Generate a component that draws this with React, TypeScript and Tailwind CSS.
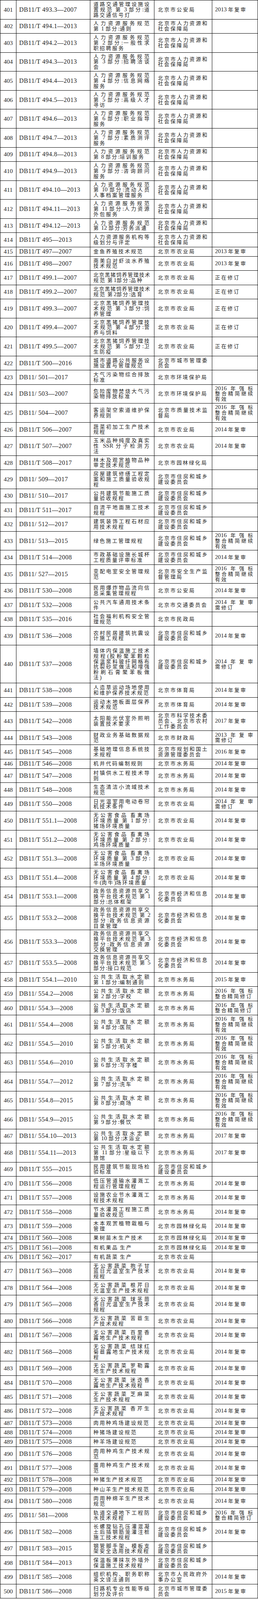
const A = "北京市人力资源和|社会保障局";
const N = "北京市农业局";
const Z = "北京市住房和城乡|建设委员会";
const S = "北京市水务局";
const Y = "北京市园林绿化局";
const J = "北京市经济和信息|化委员会";
const R13 = "2013 年复审";
const R14 = "2014 年复审";
const F = "2016 年强标|整合精简继续|有效";
const FX = "2016 年强标|整合精简修订";
const X = "正在修订";
const R14X = "2014 年复审|需修订";
const HR = "人力资源服务规范";
const GS = "公共生活取水定额";
const WG = "无公害食品 畜禽场";
const ZW = "政务信息资源共享交";
const HZ = "北京黑猪饲养管理技";

type Row = [number, string, string, string, string, number];

const rows: Row[] = [
  [401, "DB11/T 493.3—2007", "道路交通管理设施设|置规范 第 3 部分:道|路交通信号灯", "北京市公安局", R13, 3],
  [402, "DB11/T 494.1—2013", HR + "|第 1 部分:通则", A, "", 2],
  [403, "DB11/T 494.2—2013", HR + "|第 2 部分:一般性求|职招聘服务", A, "", 3],
  [404, "DB11/T 494.3—2013", HR + "|第 3 部分:招聘洽谈|会", A, "", 3],
  [405, "DB11/T 494.4—2013", HR + "|第 4 部分:信息网络|服务", A, "", 3],
  [406, "DB11/T 494.5—2013", HR + "|第 5 部分:高级人才|寻访", A, "", 3],
  [407, "DB11/T 494.6—2013", HR + "|第 6 部分:职业指导|服务", A, "", 3],
  [408, "DB11/T 494.7—2013", HR + "|第 7 部分:素质测评|服务", A, "", 3],
  [409, "DB11/T 494.8—2013", HR + "|第 8 部分:培训服务", A, "", 2],
  [410, "DB11/T 494.9—2013", HR + "|第 9 部分:咨询顾问|服务", A, "", 3],
  [411, "DB11/T 494.10—2013", HR + "|第 10 部分:流动人员|人事档案管理服务", A, "", 3],
  [412, "DB11/T 494.11—2013", HR + "|第 11 部分:人力资源|外包服务", A, "", 3],
  [413, "DB11/T 494.12—2013", HR + "|第 12 部分:劳务派遣", A, "", 2],
  [414, "DB11/T 495—2013", "人力资源服务机构等|级划分与评定", A, "", 2],
  [415, "DB11/T 497—2007", "金鱼养殖技术规范", N, R13, 1],
  [416, "DB11/T 498—2007", "南美白对虾淡水养殖|技术规范", N, R13, 2],
  [417, "DB11/T 499.1—2007", "北京黑猪饲养管理技术|规范 第1部分:品种", N, X, 2],
  [418, "DB11/T 499.2—2007", "北京黑猪饲养管理技术|规范 第2部分:选育", N, X, 2],
  [419, "DB11/T 499.3—2007", HZ + "|术规范 第 3 部分:饲|养管理", N, X, 3],
  [420, "DB11/T 499.4—2007", HZ + "|术规范 第 4 部分:营|养与饲料", N, X, 3],
  [421, "DB11/T 499.5—2007", HZ + "|术规范 第 5 部分:卫|生防疫", N, X, 3],
  [422, "DB11/T 500—2016", "城市道路公共服务设|施设置与管理规范", "北京市城市管理委|员会", "", 2],
  [423, "DB11/ 501—2017", "大气污染物综合排放|标准", "北京市环境保护局", "", 2],
  [424, "DB11/ 503—2007", "危险废物焚烧大气污|染物排放标准", "北京市环境保护局", F, 3],
  [425, "DB11/ 504—2007", "客运架空索道维护保|养规则", "北京市质量技术监|督局", F, 3],
  [426, "DB11/T 506—2007", "蔬菜初加工生产技术|规程", N, R14, 2],
  [427, "DB11/T 507—2007", "玉米品种纯度及真实|性 SSR 分子检测方|法", N, R14, 3],
  [428, "DB11/T 508—2017", "林木及观赏植物品种|审定技术规范", Y, "", 2],
  [429, "DB11/ 509—2017", "房屋建筑修缮工程定|案和施工质量验收规|程", Z, "", 3],
  [430, "DB11/ 510—2017", "公共建筑节能施工质|量验收规程", Z, "", 2],
  [431, "DB11/T 511—2017", "自流平地面施工技术|规程", Z, "", 2],
  [432, "DB11/ 512—2017", "建筑装饰工程石材应|用技术规程", Z, "", 2],
  [433, "DB11/ 513—2015", "绿色施工管理规程", Z, F, 3],
  [434, "DB11/T 514—2008", "市政基础设施长城杯|工程质量评审标准", Z, R14, 2],
  [435, "DB11/ 527—2015", "变配电室安全管理规|范", "北京市安全生产监|督管理局", F, 3],
  [436, "DB11/T 530—2008", "民用爆炸物品流向信|息采集管理规程", "北京市公安局", R14, 2],
  [437, "DB11/T 532—2008", "公共汽车通用技术条|件", "北京市交通委员会", R14X, 2],
  [438, "DB11/T 535—2016", "社会福利机构安全管|理规范", "北京市民政局", "", 2],
  [439, "DB11/T 536—2008", "农村民居建筑抗震设|计施工规程", Z, R14, 3],
  [440, "DB11/T 537—2008", "墙体内保温施工技术|规程(胶粉聚苯颗粒|保温浆料玻纤网格布|抗裂砂浆做法和增强|粉刷石膏聚苯板做|法)", Z, R14X, 7],
  [441, "DB11/T 538—2008", "人造草运动场地使用|和维护保养技术规范", "北京市体育局", R14, 2],
  [442, "DB11/T 539—2008", "运动木地板面层保养|技术规范", "北京市体育局", R14, 2],
  [443, "DB11/T 542—2008", "太阳能光伏室外照明|装置技术要求", "北京市科学技术委|员会、北京市农村|工作委员会", "2017 年复审", 3],
  [444, "DB11/T 543—2008", "财政业务基础数据规|范", "北京市财政局", "2013 年复审|需修订", 2],
  [445, "DB11/T 545—2008", "基础地理信息系统技|术规程", "北京市规划和国土|资源管理委员会", "2016 年复审", 2],
  [446, "DB11/T 546—2008", "机井代码编制规则", S, R14, 1],
  [447, "DB11/T 547—2008", "村镇供水工程技术导|则", S, R14, 2],
  [448, "DB11/T 548—2008", "生态清洁小流域技术|规范", S, R14, 2],
  [449, "DB11/T 550—2008", "日光温室用电动卷帘|机技术条件", N, R14X, 2],
  [450, "DB11/T 551.1—2008", WG + "|环境质量 第 1 部分:|猪场环境质量", N, R14, 3],
  [451, "DB11/T 551.2—2008", WG + "|环境质量 第 2 部分:|鸡场环境质量", N, R14, 3],
  [452, "DB11/T 551.3—2008", WG + "|环境质量 第 3 部分:|羊场环境质量", N, R14, 3],
  [453, "DB11/T 551.4—2008", WG + "|环境质量 第 4 部分:|牛(肉牛)场环境质量", N, R14, 3],
  [454, "DB11/T 553.1—2008", ZW + "|换平台技术规范 第 1|部分:总体框架", J, R14, 3],
  [455, "DB11/T 553.2—2008", ZW + "|换平台技术规范 第 2|部分:政务信息资源|目录管理", J, R14, 4],
  [456, "DB11/T 553.3—2008", ZW + "|换平台技术规范 第 3|部分:政务信息资源|交换管理", J, R14, 4],
  [457, "DB11/T 553.5—2008", ZW + "|换平台技术规范 第 5|部分:接口规范", J, R14, 3],
  [458, "DB11/T 554.1—2010", GS + "|第 1 部分:编制通则", S, "2015 年复审", 2],
  [459, "DB11/ 554.2—2008", GS + "|第 2 部分:学校", S, FX, 2],
  [460, "DB11/ 554.3—2008", GS + "|第 3 部分:饭店", S, FX, 2],
  [461, "DB11/ 554.4—2008", GS + "|第 4 部分:医院", S, F, 3],
  [462, "DB11/ 554.5—2010", GS + "|第 5 部分:机关", S, F, 3],
  [463, "DB11/ 554.6—2010", GS + "|第 6 部分:写字楼", S, F, 3],
  [464, "DB11/ 554.7—2012", GS + "|第 7 部分:洗车", S, F, 3],
  [465, "DB11/ 554.8—2015", GS + "|第 8 部分:商场", S, F, 3],
  [466, "DB11/ 554.9—2015", GS + "|第 9 部分:餐饮", S, F, 3],
  [467, "DB11/ 554.10—2013", GS + "|第 10 部分:沐浴业", S, "2017 年复审", 2],
  [468, "DB11/ 554.11—2013", GS + "|第 11 部分:星级以下|旅馆", S, "2017 年复审", 3],
  [469, "DB11/T 555—2015", "民用建筑节能现场检|验标准", Z, "", 2],
  [470, "DB11/T 556—2008", "低压管道输水灌溉工|程运行管理规程", S, R14, 2],
  [471, "DB11/T 557—2008", "设施农业节水灌溉工|程技术规程", S, R14, 2],
  [472, "DB11/T 558—2008", "节水灌溉工程施工质|量验收规范", S, R14, 2],
  [473, "DB11/T 559—2008", "木本观赏植物栽植与|管理", Y, R14, 2],
  [474, "DB11/T 560—2008", "果树苗木生产技术", Y, R14, 1],
  [475, "DB11/T 561—2008", "有机果品 生产", Y, R14, 1],
  [476, "DB11/T 562—2017", "有机蔬菜 生产", N, "", 1],
  [477, "DB11/T 563—2008", "无公害蔬菜 抱子甘|蓝日光温室生产技术|规程", N, R14, 3],
  [478, "DB11/T 564—2008", "无公害蔬菜 根芹日|光温室生产技术规程", N, R14, 2],
  [479, "DB11/T 565—2008", "无公害蔬菜 球茎茴|香日光温室生产技术|规程", N, R14, 3],
  [480, "DB11/T 566—2008", "无公害蔬菜 苦苣生|产技术规程", N, R14, 2],
  [481, "DB11/T 567—2008", "无公害蔬菜 百里香|露地生产技术规程", N, R14, 2],
  [482, "DB11/T 568—2008", "无公害蔬菜 结球红|菊苣露地生产技术规|程", N, R14, 3],
  [483, "DB11/T 569—2008", "无公害蔬菜 罗勒露|地生产技术规程", N, R14, 2],
  [484, "DB11/T 570—2008", "无公害蔬菜 迷迭香|露地生产技术规程", N, R14, 2],
  [485, "DB11/T 571—2008", "无公害蔬菜 芝麻菜|生产技术规程", N, R14, 2],
  [486, "DB11/T 572—2008", "无公害蔬菜 香芹生|产技术规程", N, R14, 2],
  [487, "DB11/T 573—2008", "肉用种鸡场建设规范", N, R14, 1],
  [488, "DB11/T 574—2008", "种猪场建设规范", N, R14, 1],
  [489, "DB11/T 575—2008", "种羊场建设规范", N, R14, 1],
  [490, "DB11/T 576—2008", "肉用种鸡生产技术规|范", N, R14, 2],
  [491, "DB11/T 577—2008", "蛋用种鸡生产技术规|范", N, R14, 2],
  [492, "DB11/T 578—2008", "种猪生产技术规范", N, R14, 1],
  [493, "DB11/T 579—2008", "种山羊生产技术规范", N, R14, 1],
  [494, "DB11/T 580—2008", "肉用种绵羊生产技术|规范", N, R14, 2],
  [495, "DB11/ 581—2008", "轨道交通地下工程防|水技术规程", Z, FX, 2],
  [496, "DB11/T 582—2008", "长螺旋钻孔压灌混凝|土后插钢筋笼灌注桩|施工技术规程", Z, R14, 3],
  [497, "DB11/T 583—2015", "钢管脚手架、模板支|架安全选用技术规程", Z, "", 2],
  [498, "DB11/T 584—2013", "保温板薄抹灰外墙外|保温施工技术规程", Z, "", 2],
  [499, "DB11/T 585—2008", "组织机构、职务职称|英文译法通则", "北京市人民政府外|事办公室", R14, 2],
  [500, "DB11/T 586—2008", "扫路机专业性能等级|划分及评价", "北京市城市管理委|员会", "2015 年复审", 2],
];

const heights: Record<number, string> = {
  1: "h-[24.3px]",
  2: "h-[36.4px]",
  3: "h-[48.6px]",
  4: "h-[60.7px]",
  7: "h-[97.2px]",
};

const FS = 13;
const LS = 3;
const LATIN = 1.15; // latin runs are set a little larger than the CJK text

// rough advance width of a latin run, in em
function latinUnits(s: string) {
  let u = 0;
  for (const ch of s) {
    if (ch === " ") u += 0.25;
    else if (ch === ":") u += 0.28;
    else if (ch === "(" || ch === ")") u += 0.34;
    else if (/[A-Z]/.test(ch)) u += 0.7;
    else u += 0.5;
  }
  return u;
}

const isLatin = (s: string) => /^[\x00-\x7f]+$/.test(s);

function Lines({ text, avail }: { text: string; avail: number }) {
  const parts = text ? text.split("|") : [];
  return (
    <>
      {parts.map((p, i) => {
        const last = i === parts.length - 1;
        const runs = p.split(/([^\x00-\x7f]+)/).filter(Boolean);
        let cjk = 0;
        let lat = 0;
        for (const r of runs) {
          if (isLatin(r)) lat += latinUnits(r);
          else cjk += [...r].length;
        }
        const room = avail - 3;
        let fs = FS;
        let ls = cjk ? Math.min(LS, (room - cjk * fs - lat * fs * LATIN) / cjk) : 0;
        if (ls < 0) {
          ls = 0;
          fs = room / (cjk + lat * LATIN);
        }
        return (
          <div
            key={i}
            className={`h-[13.8px] leading-[13.8px] whitespace-nowrap ${
              last ? "text-left" : "text-justify [text-align-last:justify]"
            }`}
            style={fs !== FS ? { fontSize: fs } : undefined}
          >
            {runs.map((r, j) =>
              isLatin(r) ? (
                <span key={j} style={{ fontSize: fs * LATIN }}>
                  {r}
                </span>
              ) : (
                <span key={j} style={{ letterSpacing: ls }}>
                  {r}
                </span>
              )
            )}
          </div>
        );
      })}
    </>
  );
}

export default function App() {
  return (
    <main className="w-[660px] bg-white font-['Liberation_Serif','Noto_Sans_CJK_SC',serif] text-[13px] leading-[13.8px] text-[#222]">
      <div className="flex flex-col border-l border-t border-black">
        {rows.map(([num, code, name, dept, remark, lines]) => (
          <div
            key={num}
            className={`grid shrink-0 grid-cols-[41px_189px_164px_148px_117px] overflow-hidden border-b border-black ${heights[lines]}`}
          >
            <div className="flex items-center justify-center border-r border-black text-[15.5px]">
              {num}
            </div>
            <div className="flex items-center whitespace-nowrap border-r border-black pl-[7px] text-[16px] tracking-[0.5px]">
              {code}
            </div>
            <div className="flex flex-col justify-center border-r border-black pl-2 pr-[9px]">
              <Lines text={name} avail={147} />
            </div>
            <div className="flex flex-col justify-center border-r border-black px-[9px]">
              <Lines text={dept} avail={130} />
            </div>
            <div className="flex flex-col justify-center border-r border-black pl-[7px] pr-[9px]">
              <Lines text={remark} avail={101} />
            </div>
          </div>
        ))}
      </div>
    </main>
  );
}
